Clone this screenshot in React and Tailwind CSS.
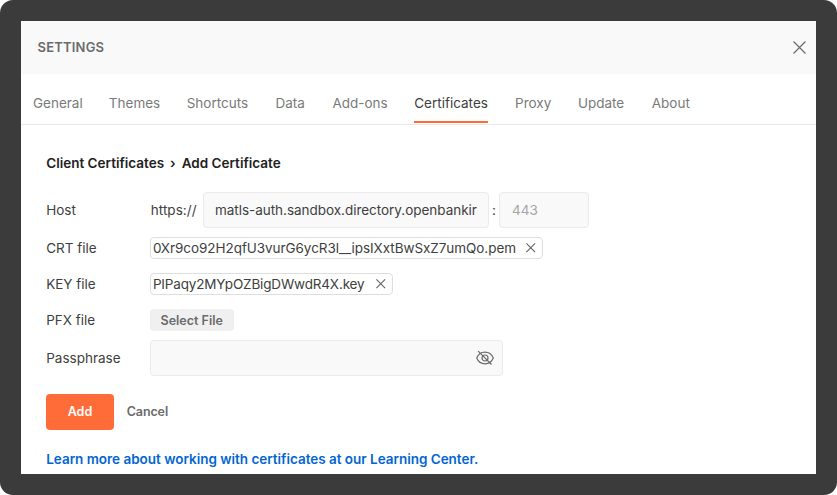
const tabs = [
  ['General', 'w-[49px]'],
  ['Themes', 'w-[51px]'],
  ['Shortcuts', 'w-[62px]'],
  ['Data', 'w-[30px]'],
  ['Add-ons', 'w-[55px]'],
  ['Certificates', 'w-[74px]'],
  ['Proxy', 'w-[36px]'],
  ['Update', 'w-[47px]'],
  ['About', 'w-[38px]'],
];

function Cross({ className }) {
  return (
    <svg viewBox="0 0 12 12" className={className} fill="none" stroke="currentColor" aria-hidden="true">
      <path d="M.5.5l11 11M11.5.5l-11 11" />
    </svg>
  );
}

function EyeOff() {
  return (
    <svg viewBox="0 0 18 16" className="h-4 w-[18px] text-[#6b6b6b]" fill="none" stroke="currentColor" strokeWidth="1.2" aria-hidden="true">
      <path d="M.7 8C2.3 4.200 5.300 2.200 9 2.200S15.700 4.200 17.300 8C15.700 11.800 12.700 13.800 9 13.800S2.300 11.800.7 8z" />
      <circle cx="9" cy="8" r="3" />
      <path d="M2.200 1.200l13.300 13.300" />
    </svg>
  );
}

function Row({ label, className, children }) {
  return (
    <div className={`flex items-center ${className}`}>
      <span className="w-[103.500px] shrink-0">{label}</span>
      {children}
    </div>
  );
}

function FileChip({ name, className }) {
  return (
    <div className={`flex h-[22px] items-center justify-between rounded-[4px] border border-[#dedede] bg-white pr-[6.500px] pl-[2.200px] ${className}`}>
      <span>{name}</span>
      <Cross className="h-[9.500px] w-[9.500px] stroke-[1.35] text-[#636363]" />
    </div>
  );
}

export default function App() {
  return (
    <div className="h-[495px] w-[837px] rounded-[13px] bg-[#3b3b3b] p-[21px] font-['Inter',sans-serif] text-[13.5px] leading-5 whitespace-nowrap text-[#404040]">
      <div className="flex h-[453px] w-[795px] flex-col bg-white">
        <header className="flex h-[53px] shrink-0 items-center justify-between bg-[#f9f9f9] pr-[10px] pb-px pl-[16.500px]">
          <h1 className="text-[13px] font-semibold tracking-[0.2px] text-[#6b6b6b]">SETTINGS</h1>
          <Cross className="h-[13px] w-[13px] stroke-[1.1] text-[#6b6b6b]" />
        </header>
        <nav className="flex h-[51px] shrink-0 gap-[26.850px] border-b border-[#e8e8e8] pl-3 text-[#7a7a7a]">
          {tabs.map(([name, width]) => (
            <a
              key={name}
              className={`flex items-center ${width} ${name === 'Certificates' ? 'mb-px border-b-2 border-[#ff6c37] pt-[11px] text-[#404040]' : 'pt-2'}`}
            >
              {name}
            </a>
          ))}
        </nav>
        <main className="pt-7 pl-[25.200px]">
          <h2 className="flex gap-[6px] font-semibold text-[#212121]">
            <span>Client Certificates</span>
            <span>›</span>
            <span>Add Certificate</span>
          </h2>
          <Row label="Host" className="mt-[19px] h-9">
            <span className="w-[53.300px] pl-px tracking-[0.060px]">https://</span>
            <div className="h-9 w-[286px] rounded-[4px] border border-[#ebebeb] bg-[#f9f9f9] pl-[11px] leading-[34px] tracking-[-0.030px]">
              matls-auth.sandbox.directory.openbankir
            </div>
            <span className="w-[10px] text-center">:</span>
            <div className="h-9 w-[90px] rounded-[4px] border border-[#ebebeb] bg-[#f9f9f9] pl-3 leading-[34px] text-[#a6a6a6]">443</div>
          </Row>
          <Row label="CRT file" className="mt-[9px] h-[22px]">
            <FileChip name="0Xr9co92H2qfU3vurG6ycR3l__ipsIXxtBwSxZ7umQo.pem" className="w-[393.500px] tracking-[-0.060px]" />
          </Row>
          <Row label="KEY file" className="mt-[14px] h-[22px]">
            <FileChip name="PIPaqy2MYpOZBigDWwdR4X.key" className="w-[243.500px] tracking-[-0.160px]" />
          </Row>
          <Row label="PFX file" className="mt-[14px] h-[22px]">
            <button className="h-[22px] w-[84px] rounded-[4px] bg-[#f0f0f0] pt-px text-[12.5px] font-semibold text-[#6b6b6b]">Select File</button>
          </Row>
          <Row label="Passphrase" className="mt-[9px] h-9">
            <div className="flex h-9 w-[353px] items-center justify-end rounded-[4px] border border-[#ebebeb] bg-[#f9f9f9] pr-[8px]">
              <EyeOff />
            </div>
          </Row>
          <div className="mt-[18px] flex h-9 items-center gap-[13px] text-[12.5px] font-semibold">
            <button className="h-9 w-[67.500px] rounded-[4px] bg-[#ff6c37] text-white">Add</button>
            <button className="tracking-[-0.100px] text-[#6b6b6b]">Cancel</button>
          </div>
          <a className="mt-[19px] block font-semibold tracking-[-0.020px] text-[#0265d2]">Learn more about working with certificates at our Learning Center.</a>
        </main>
      </div>
    </div>
  );
}
